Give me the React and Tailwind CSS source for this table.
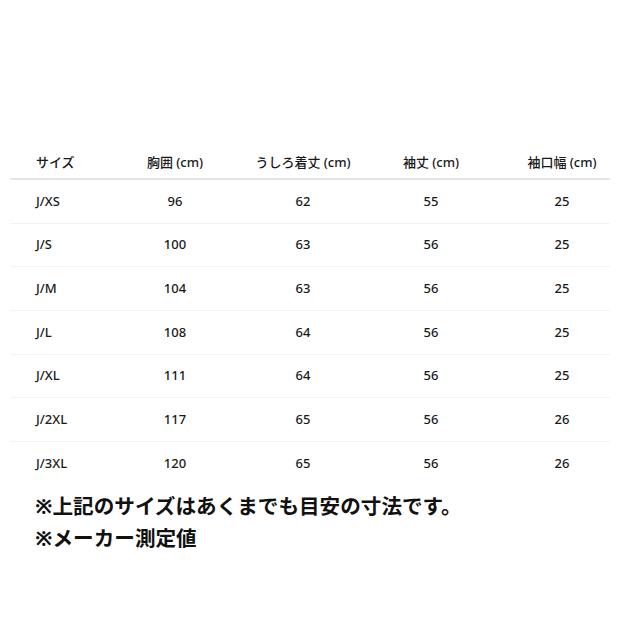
const HEADERS = ['サイズ', '胸囲 (cm)', 'うしろ着丈 (cm)', '袖丈 (cm)', '袖口幅 (cm)'];

const ROWS = [
  ['J/XS', '96', '62', '55', '25'],
  ['J/S', '100', '63', '56', '25'],
  ['J/M', '104', '63', '56', '25'],
  ['J/L', '108', '64', '56', '25'],
  ['J/XL', '111', '64', '56', '25'],
  ['J/2XL', '117', '65', '56', '26'],
  ['J/3XL', '120', '65', '56', '26'],
];

const COLS = 'grid grid-cols-[101px_128px_128px_128px_115px]';

function Cell({ i, children }) {
  if (i === 0) return <div className="pl-[26px] text-left">{children}</div>;
  if (i === 4) return <div className="pl-[19px] text-center">{children}</div>;
  return <div className="text-center">{children}</div>;
}

export default function App() {
  return (
    <div
      className="w-[620px] h-[620px] bg-white pt-[152px]"
      style={{ fontFamily: '"Noto Sans", "Noto Sans CJK JP", sans-serif' }}
    >
      <div className="mx-[10px] w-[600px] text-[13px] font-medium text-[#1a1a1a]">
        <div className={`${COLS} leading-5 pb-[6px] border-b-2 border-[#e6e6e6]`}>
          {HEADERS.map((h, i) => (
            <Cell key={h} i={i}>{h}</Cell>
          ))}
        </div>
        {ROWS.map((row, r) => (
          <div
            key={row[0]}
            className={`${COLS} items-center h-[43.67px] ${r < ROWS.length - 1 ? 'border-b border-[#f3f3f3]' : ''}`}
          >
            {row.map((v, i) => (
              <Cell key={i} i={i}>{v}</Cell>
            ))}
          </div>
        ))}
      </div>
      <div className="mt-[4px] pl-[35px] text-[20.6px] leading-[32px] font-bold text-[#111]">
        <p>※上記のサイズはあくまでも目安の寸法です。</p>
        <p>※メーカー測定値</p>
      </div>
    </div>
  );
}
